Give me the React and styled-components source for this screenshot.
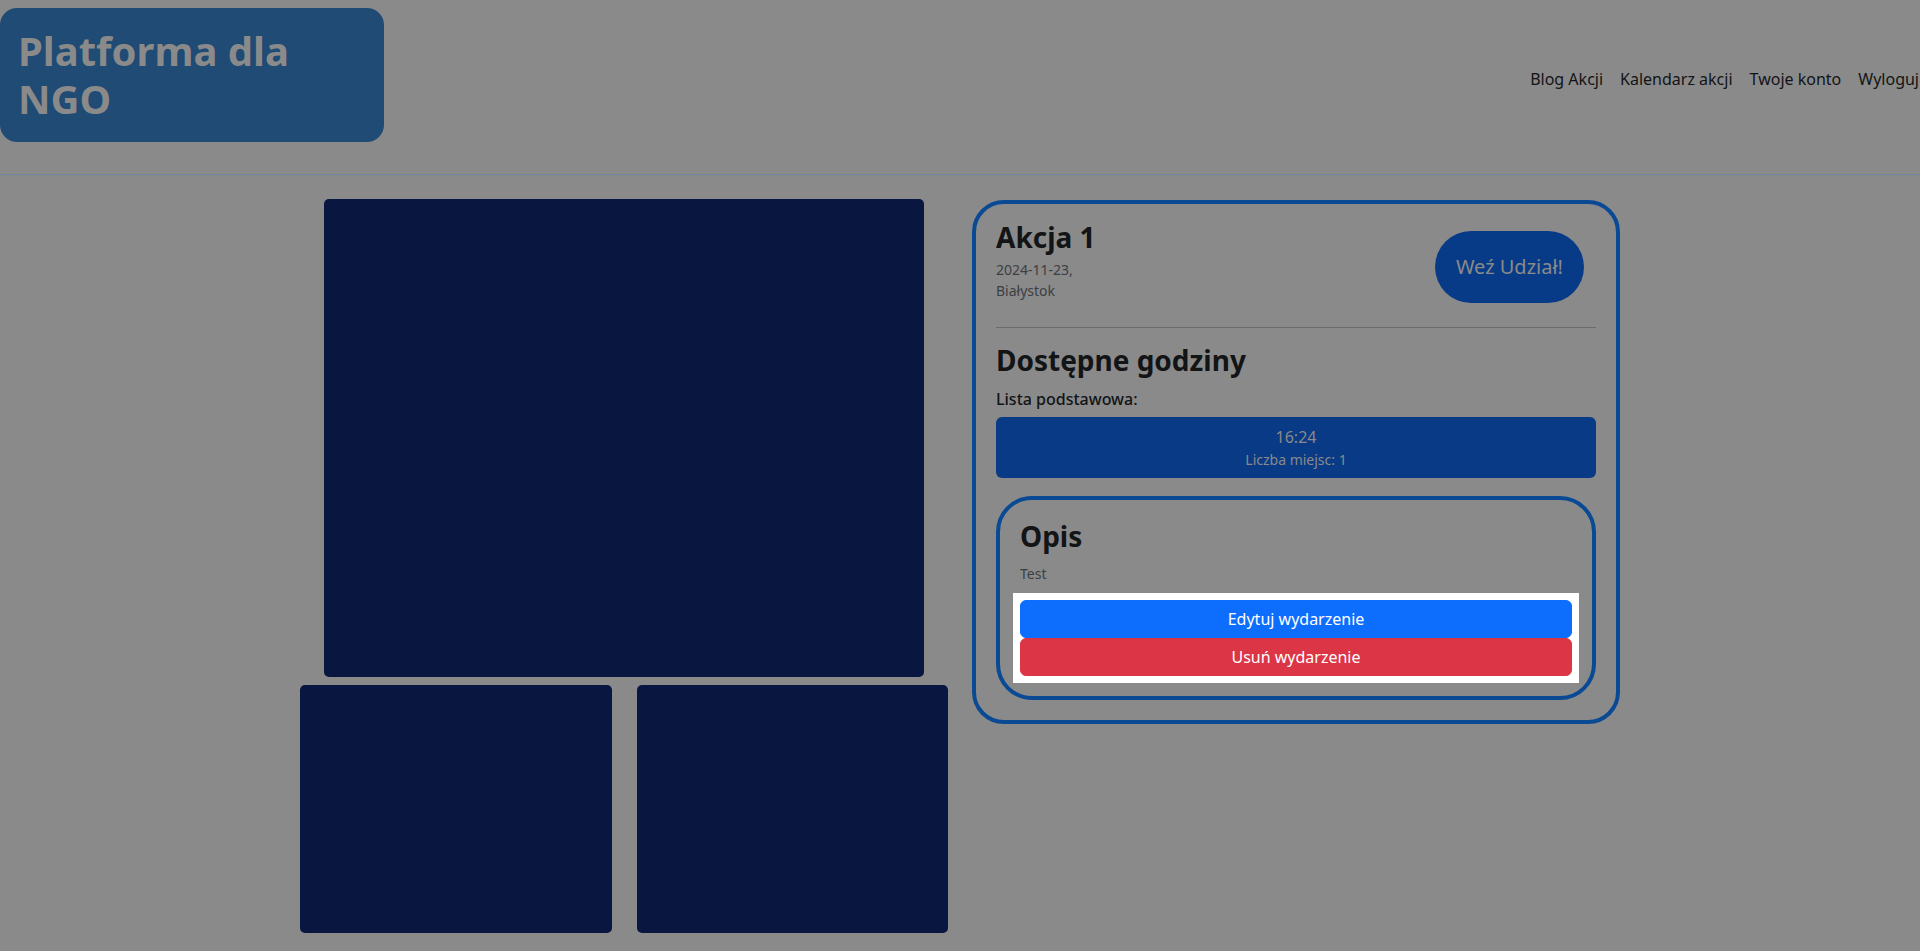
import React from "react";
import styled, { createGlobalStyle } from "styled-components";

const GlobalStyle = createGlobalStyle`
  * {
    box-sizing: border-box;
  }

  body {
    margin: 0;
    background: #8a8a8a;
    font-family: "Noto Sans", "Open Sans", sans-serif;
    color: #121416;
  }
`;

const NAV_LINKS = ["Blog Akcji", "Kalendarz akcji", "Twoje konto", "Wyloguj"];

const App = () => {
  return (
    <>
      <GlobalStyle />
      <Header>
        <Logo>Platforma dla NGO</Logo>
        <Nav>
          {NAV_LINKS.map((link) => (
            <NavLink key={link}>{link}</NavLink>
          ))}
        </Nav>
      </Header>

      <Main>
        <Gallery>
          <MainPhoto />
          <Thumbs>
            <Thumb />
            <Thumb />
          </Thumbs>
        </Gallery>

        <EventCard>
          <CardHead>
            <div>
              <Title>Akcja 1</Title>
              <Meta>2024-11-23,</Meta>
              <Meta>Białystok</Meta>
            </div>
            <JoinButton>Weź Udział!</JoinButton>
          </CardHead>

          <Divider />

          <Title>Dostępne godziny</Title>
          <ListLabel>Lista podstawowa:</ListLabel>
          <Slot>
            <SlotTime>16:24</SlotTime>
            <SlotSeats>Liczba miejsc: 1</SlotSeats>
          </Slot>

          <DescriptionCard>
            <Title $gap={10}>Opis</Title>
            <Meta $gap={16}>Test</Meta>
            <AdminActions>
              <ActionButton $variant="primary">Edytuj wydarzenie</ActionButton>
              <ActionButton $variant="danger">Usuń wydarzenie</ActionButton>
            </AdminActions>
          </DescriptionCard>
        </EventCard>
      </Main>
    </>
  );
};

export default App;

const Header = styled.header`
  display: flex;
  justify-content: space-between;
  align-items: center;
  padding: 8px 0 32px;
  border-bottom: 1px solid #6c87a3;
`;

const Logo = styled.div`
  width: 384px;
  padding: 19px 18px;
  background: #1f4b75;
  border-radius: 17px;
  color: #8a8a8a;
  font-size: 40px;
  font-weight: 700;
  line-height: 48px;
`;

const Nav = styled.nav`
  display: flex;
  gap: 17px;
  padding-top: 8px;
  margin-right: 1px;
`;

const NavLink = styled.a`
  font-size: 16px;
  line-height: 24px;
  color: #121416;
  text-decoration: none;
  cursor: pointer;
`;

const Main = styled.main`
  width: 1320px;
  margin: 24px auto 0;
  display: grid;
  grid-template-columns: 648px 648px;
  gap: 24px;
  align-items: start;
`;

const Gallery = styled.div`
  display: flex;
  flex-direction: column;
  align-items: center;
  gap: 8px;
`;

const MainPhoto = styled.div`
  width: 600px;
  height: 478px;
  background: #081640;
  border-radius: 5px;
`;

const Thumbs = styled.div`
  width: 100%;
  display: grid;
  grid-template-columns: 1fr 1fr;
  gap: 25px;
`;

const Thumb = styled.div`
  height: 248px;
  background: #081640;
  border-radius: 5px;
`;

const EventCard = styled.section`
  margin-top: 1px;
  padding: 17px 20px 20px;
  border: 4px solid #0a4a94;
  border-radius: 32px;
`;

const CardHead = styled.div`
  display: flex;
  justify-content: space-between;
  align-items: flex-start;
`;

const Title = styled.h2`
  margin: 0 0 ${({ $gap }) => ($gap ?? 4)}px;
  font-size: 28px;
  line-height: 1.2;
  font-weight: 700;
  color: #121416;
`;

const Meta = styled.p`
  margin: 0 0 ${({ $gap }) => ($gap ?? 0)}px;
  font-size: 14px;
  line-height: 21px;
  color: #3b3f43;
`;

const JoinButton = styled.button`
  margin: 10px 12px 0 0;
  padding: 21px 21px;
  border: none;
  border-radius: 36px;
  background: #083b87;
  color: #8a8a8a;
  font-family: inherit;
  font-size: 20px;
  line-height: 30px;
  cursor: pointer;
`;

const Divider = styled.hr`
  margin: 24px 0 16px;
  border: 0;
  border-top: 1px solid #6c6c6c;
`;

const ListLabel = styled.p`
  margin: 9px 0 6px;
  font-size: 16px;
  font-weight: 500;
  line-height: 24px;
`;

const Slot = styled.div`
  padding: 8px;
  background: #083a85;
  border-radius: 6px;
  text-align: center;
  color: #8a8a8a;
`;

const SlotTime = styled.div`
  font-size: 16px;
  line-height: 24px;
`;

const SlotSeats = styled.div`
  font-size: 14px;
  line-height: 21px;
`;

const DescriptionCard = styled.div`
  margin-top: 18px;
  padding: 20px;
  border: 4px solid #0a4a94;
  border-radius: 36px;
`;

const AdminActions = styled.div`
  display: flex;
  flex-direction: column;
  background: #fff;
  box-shadow: 0 0 0 7px #fff;
`;

const ActionButton = styled.button`
  width: 100%;
  padding: 6px 12px;
  border: 1px solid
    ${({ $variant }) => ($variant === "danger" ? "#dc3545" : "#0d6efd")};
  border-radius: 6px;
  background: ${({ $variant }) => ($variant === "danger" ? "#dc3545" : "#0d6efd")};
  color: #fff;
  font-family: inherit;
  font-size: 16px;
  line-height: 24px;
  cursor: pointer;
`;
